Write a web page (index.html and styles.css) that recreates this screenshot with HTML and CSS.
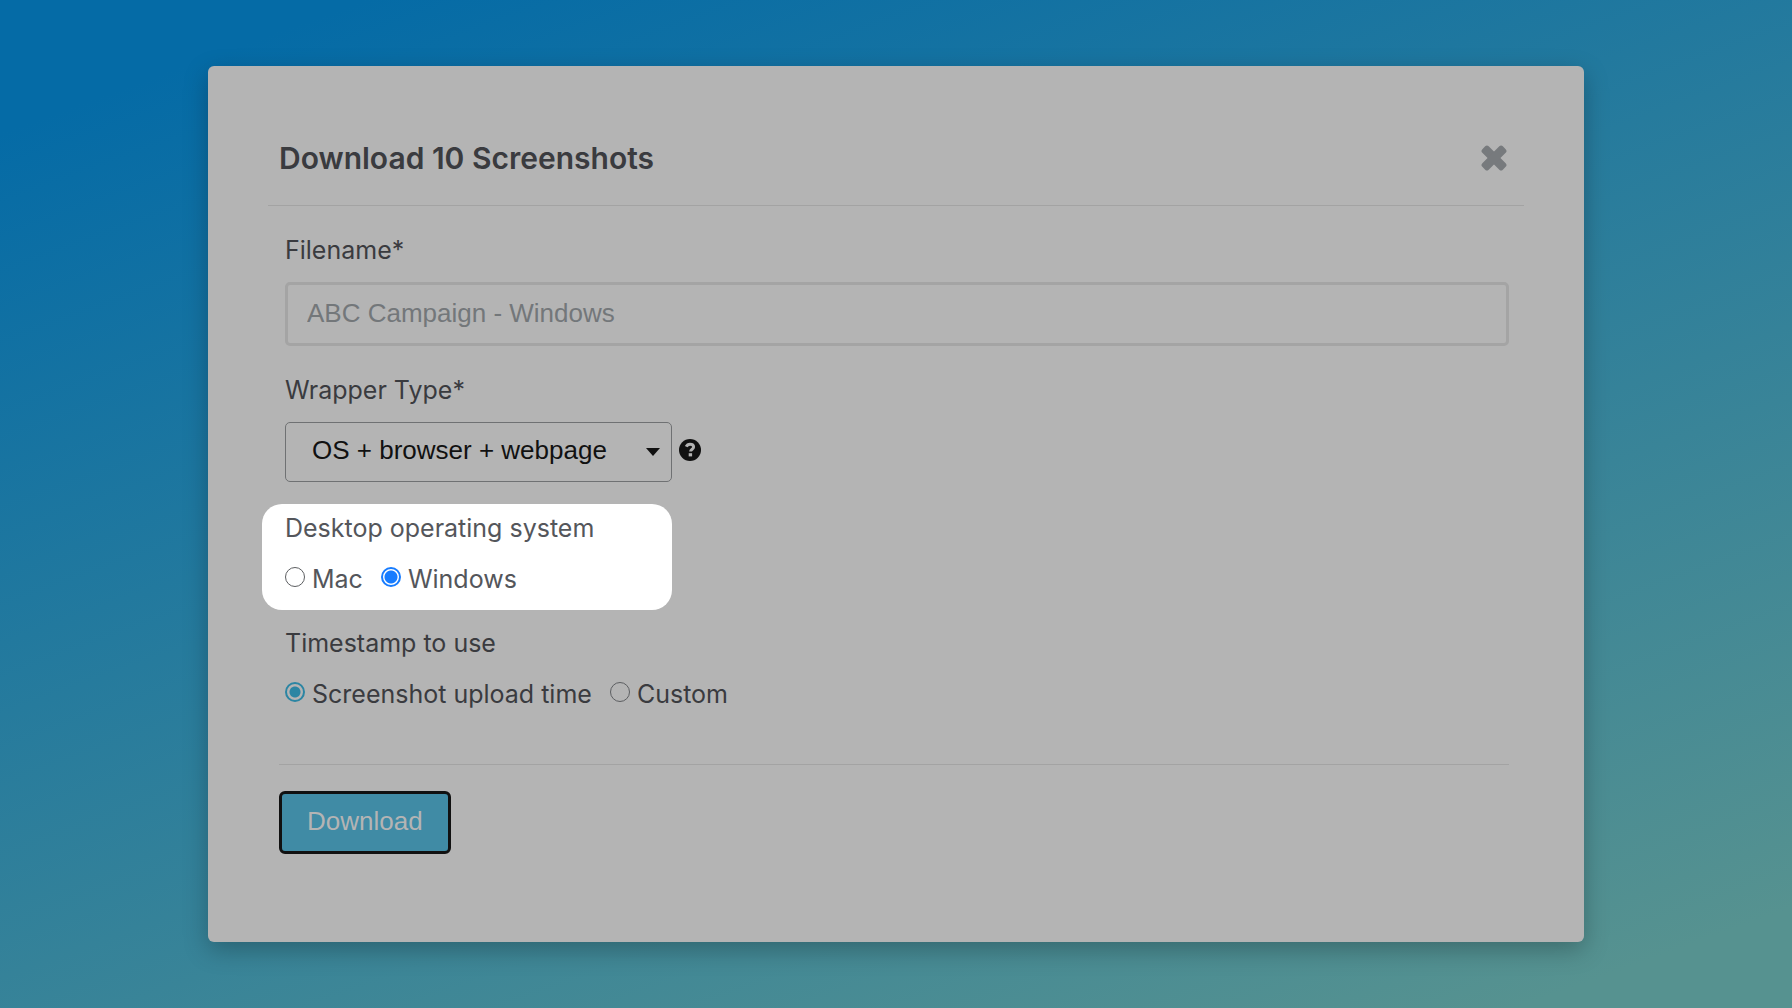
FILE: index.html
```
<!DOCTYPE html>
<html lang="en">
<head>
  <meta charset="UTF-8" />
  <meta name="viewport" content="width=device-width, initial-scale=1" />
  <title>Download Screenshots</title>
  <link rel="stylesheet" href="styles.css">
</head>

<body>
  <main class="modal">
    <header class="modal-header">
      <h1>Download 10 Screenshots</h1>
      <button class="btn-close" type="button" aria-label="Close">
        <svg viewBox="0 0 26 26" width="26" height="26">
          <rect x="-1.500" y="8.500" width="29" height="9" rx="2.500" transform="rotate(45 13 13)" />
          <rect x="-1.500" y="8.500" width="29" height="9" rx="2.500" transform="rotate(-45 13 13)" />
        </svg>
      </button>
    </header>

    <form>
      <div class="fields">
        <div class="field">
          <label class="label" for="filename">Filename*</label>
          <input class="text-input" type="text" id="filename" placeholder="ABC Campaign - Windows">
        </div>

        <div class="field">
          <label class="label" for="wrapper">Wrapper Type*</label>
          <div class="select-row">
            <div class="select-box">
              <select id="wrapper">
                <option>OS + browser + webpage</option>
              </select>
              <svg class="caret" viewBox="0 0 14 8" width="14" height="8">
                <path d="M0 0h14L7 8z" />
              </svg>
            </div>
            <button class="btn-help" type="button" aria-label="Help">
              <svg viewBox="0 0 22 22" width="22" height="22">
                <circle cx="11" cy="11" r="11" />
                <path class="hook" d="M7.2 7.7C8 6 9.300 5.200 11 5.200c2.100 0 3.600 1.200 3.600 2.900 0 2.200-3 2.200-3 4.500" />
                <rect x="9.700" y="14.200" width="3.400" height="3.200" />
              </svg>
            </button>
          </div>
        </div>

        <fieldset class="radio-group highlight">
          <legend class="label">Desktop operating system</legend>
          <div class="radios">
            <label><input type="radio" name="os" value="mac">Mac</label>
            <label><input type="radio" name="os" value="windows" checked>Windows</label>
          </div>
        </fieldset>

        <fieldset class="radio-group">
          <legend class="label">Timestamp to use</legend>
          <div class="radios">
            <label><input type="radio" name="timestamp" value="upload" checked>Screenshot upload time</label>
            <label><input type="radio" name="timestamp" value="custom">Custom</label>
          </div>
        </fieldset>
      </div>

      <footer class="modal-footer">
        <button class="btn-download" type="button">Download</button>
      </footer>
    </form>
  </main>
</body>
</html>
```
FILE: styles.css
```
* {
  box-sizing: border-box;
  margin: 0;
  padding: 0;
}

body {
  min-height: 100vh;
  padding: 66px 208px;
  background: linear-gradient(160deg, #056ba6 8%, #569290 94%);
  color: #3a3b3f;
  font-family: Inter, "Liberation Sans", sans-serif;
  font-size: 25px;
  line-height: 32px;
}

.modal {
  padding: 44px 60px 88px;
  border-radius: 6px;
  background-color: #b4b4b4;
  box-shadow: 0 8px 24px rgba(0, 0, 0, 0.25);
}

.modal-header {
  display: flex;
  justify-content: space-between;
  align-items: center;
  height: 96px;
  padding: 0 17px 0 11px;
  border-bottom: 1px solid #a3a3a3;
}

h1 {
  font-size: 30px;
  font-weight: 600;
  line-height: 40px;
}

button {
  border: none;
  background: none;
  cursor: pointer;
}

svg {
  display: block;
}

.btn-close {
  fill: #777a7d;
}

.fields {
  padding: 28px 15px 54px 17px;
}

.field {
  display: flex;
  flex-direction: column;
  gap: 16px;
  margin-bottom: 28px;
}

.field + .field {
  margin-bottom: 22px;
}

.text-input {
  width: 100%;
  height: 64px;
  padding: 0 19px 2px;
  border: 3px solid #a4a4a4;
  border-radius: 5px;
  background: transparent;
  font-family: "Liberation Sans", sans-serif;
  font-size: 26px;
}

.text-input::placeholder {
  color: #73777a;
}

.select-row {
  display: flex;
  align-items: center;
  gap: 7px;
}

.select-box {
  position: relative;
}

select {
  display: block;
  appearance: none;
  width: 387px;
  height: 60px;
  padding: 0 40px 4px 26px;
  border: 1px solid #6f7173;
  border-radius: 5px;
  background: transparent;
  color: #111;
  font-family: "Liberation Sans", sans-serif;
  font-size: 26px;
}

.caret {
  position: absolute;
  right: 12px;
  top: 26px;
  fill: #111;
  pointer-events: none;
}

.btn-help {
  padding-bottom: 4px;
  fill: #111;
}

.btn-help .hook {
  fill: none;
  stroke: #b4b4b4;
  stroke-width: 3;
}

.btn-help rect {
  fill: #b4b4b4;
}

.radio-group {
  padding: 17px 0 0;
  border: none;
}

.highlight {
  width: 410px;
  margin-left: -23px;
  padding: 8px 23px 15px;
  border-radius: 20px;
  background-color: #fff;
  color: #54565b;
}

/* float keeps the legend inside the padding box */
legend {
  float: left;
  width: 100%;
  margin-bottom: 19px;
}

.radios {
  clear: both;
  display: flex;
  gap: 18px;
}

.radios label {
  display: flex;
  align-items: center;
  gap: 7px;
}

input[type="radio"] {
  appearance: none;
  width: 20px;
  height: 20px;
  margin-bottom: 4px;
  border: 1px solid #5c5e61;
  border-radius: 50%;
}

input[type="radio"]:checked {
  border: 2px solid #2b85a3;
  background: radial-gradient(circle, #2b85a3 5px, transparent 6px);
}

.highlight input[type="radio"]:checked {
  border-color: #177cff;
  background: radial-gradient(circle, #177cff 6px, transparent 7px);
}

.modal-footer {
  margin: 0 15px 0 11px;
  padding-top: 26px;
  border-top: 1px solid #a3a3a3;
}

.btn-download {
  height: 63px;
  padding: 0 25px 3px;
  border: 3px solid #111;
  border-radius: 6px;
  background-color: #408ba5;
  color: #b4b4b4;
  font-family: "Liberation Sans", sans-serif;
  font-size: 26px;
}
```
